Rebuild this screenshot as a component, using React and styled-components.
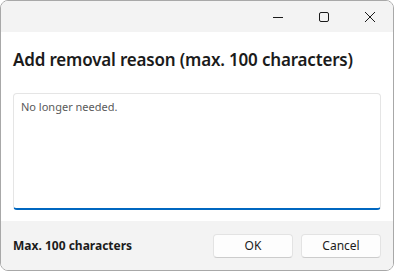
import React from "react";
import styled, { createGlobalStyle } from "styled-components";

const Global = createGlobalStyle`
	html, body {
		margin: 0;
		padding: 0;
		background: #ffffff;
	}
	body {
		font-family: "Noto Sans", "Open Sans", sans-serif;
	}
`;

export default function App() {
	return (
		<>
			<Global />
			<Window>
				<TitleBar>
					<Caption>
						<svg width="10" height="10" viewBox="0 0 10 10">
							<path d="M0 5.5 H10" stroke="#1a1a1a" strokeWidth="1" />
						</svg>
					</Caption>
					<Caption>
						<svg width="12" height="12" viewBox="0 0 12 12">
							<rect x="1.5" y="1.5" width="9" height="9" rx="1.5" fill="none" stroke="#1a1a1a" strokeWidth="1" />
						</svg>
					</Caption>
					<Caption>
						<svg width="12" height="12" viewBox="0 0 12 12">
							<path d="M1 1 L11 11 M11 1 L1 11" stroke="#1a1a1a" strokeWidth="1" />
						</svg>
					</Caption>
				</TitleBar>

				<Body>
					<Heading>Add removal reason (max. 100 characters)</Heading>
					<TextBox defaultValue="No longer needed." />
				</Body>

				<Footer>
					<Hint>Max. 100 characters</Hint>
					<Buttons>
						<Button>OK</Button>
						<Button>Cancel</Button>
					</Buttons>
				</Footer>
			</Window>
		</>
	);
}

const Window = styled.div`
	box-sizing: border-box;
	width: 394px;
	height: 271px;
	border: 1px solid #a8a8a8;
	border-radius: 8px;
	overflow: hidden;
	display: flex;
	flex-direction: column;
	background: #ffffff;
`;

const TitleBar = styled.div`
	height: 31px;
	background: #f3f3f3;
	display: flex;
	justify-content: flex-end;
`;

const Caption = styled.div`
	width: 46px;
	display: flex;
	align-items: center;
	justify-content: center;
`;

const Body = styled.div`
	flex: 1;
	padding: 16px 12px 11px 12px;
	display: flex;
	flex-direction: column;
`;

const Heading = styled.h1`
	margin: 0 0 21px 0;
	font-size: 17px;
	font-weight: 600;
	color: #1b1b1b;
	line-height: 24px;
	letter-spacing: -0.18px;
`;

const TextBox = styled.textarea`
	flex: 1;
	box-sizing: border-box;
	resize: none;
	outline: none;
	border: 1px solid #e5e5e5;
	border-bottom: 2px solid #0067c0;
	border-radius: 4px;
	padding: 5px 7px;
	font-family: "Noto Sans", "Open Sans", sans-serif;
	font-size: 11px;
	line-height: 15px;
	color: #5a5a5a;
	background: #ffffff;
`;

const Footer = styled.div`
	height: 49px;
	background: #f3f3f3;
	display: flex;
	align-items: center;
	justify-content: space-between;
	padding: 0 12px;
`;

const Hint = styled.span`
	font-size: 12px;
	font-weight: 700;
	color: #1b1b1b;
`;

const Buttons = styled.div`
	display: flex;
	gap: 8px;
`;

const Button = styled.button`
	width: 80px;
	height: 24px;
	box-sizing: border-box;
	background: #fdfdfd;
	border: 1px solid #e3e3e3;
	border-bottom-color: #cccccc;
	border-radius: 4px;
	font-family: "Noto Sans", "Open Sans", sans-serif;
	font-size: 12px;
	color: #1b1b1b;
	padding: 0;
`;
